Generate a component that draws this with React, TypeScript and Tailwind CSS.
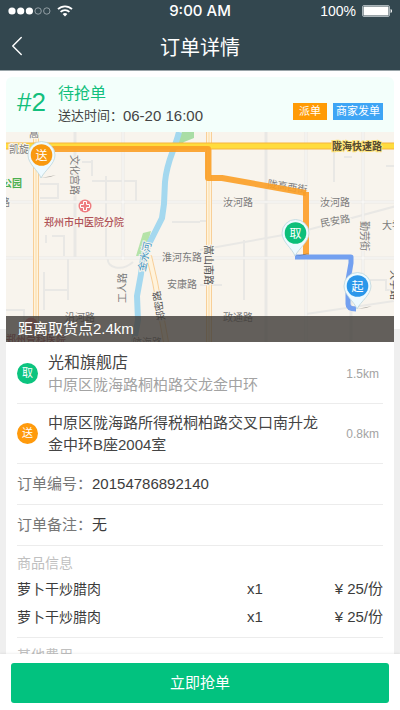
import { ChevronLeft } from "lucide-react";

type Stop = {
  mark: string;
  color: string;
  name?: string;
  address: string;
  distance: string;
};

const pickup: Stop = {
  mark: "取",
  color: "bg-[#0cc47f]",
  name: "光和旗舰店",
  address: "中原区陇海路桐柏路交龙金中环",
  distance: "1.5km",
};

const dropoff: Stop = {
  mark: "送",
  color: "bg-[#ff9a0c]",
  address: "中原区陇海路所得税桐柏路交叉口南升龙金中环B座2004室",
  distance: "0.8km",
};

const goods = [
  { id: 1, name: "萝卜干炒腊肉", count: 1, price: 25 },
  { id: 2, name: "萝卜干炒腊肉", count: 1, price: 25 },
];

function StatusBar() {
  return (
    <div className="grid h-[22px] grid-cols-3 items-center px-2 text-white">
      <div className="flex items-center gap-[6px]">
        <svg width="43" height="8" viewBox="0 0 43 8" aria-hidden="true">
          <circle cx="4" cy="4" r="3.6" fill="#fff" />
          <circle cx="12.7" cy="4" r="3.6" fill="#fff" />
          <circle cx="21.4" cy="4" r="3.6" fill="#fff" />
          <circle cx="30.1" cy="4" r="3.2" fill="none" stroke="#a9b4b9" strokeWidth="0.8" />
          <circle cx="38.8" cy="4" r="3.2" fill="none" stroke="#a9b4b9" strokeWidth="0.8" />
        </svg>
        <svg width="16" height="12" viewBox="0 0 16 12" fill="none" stroke="#fff" strokeWidth="1.8" aria-hidden="true">
          <path d="M1 4.2a10 10 0 0 1 14 0" />
          <path d="M3.6 6.9a6.3 6.3 0 0 1 8.8 0" />
          <path d="M8 11.6 5.6 9.1a3.4 3.4 0 0 1 4.8 0Z" fill="#fff" stroke="none" />
        </svg>
      </div>
      <span className="text-center font-[Inter] text-[15px] font-medium">9:00 AM</span>
      <div className="flex items-center justify-end gap-[6px]">
        <span className="text-sm">100%</span>
        <svg width="30" height="12" viewBox="0 0 30 12" aria-hidden="true">
          <rect x="0.5" y="0.5" width="27" height="11" rx="1.5" fill="none" stroke="#a9b4b9" />
          <rect x="1.5" y="1.5" width="25" height="9" rx="0.5" fill="#fff" />
          <path d="M28.600 4C30.400 4.600 30.400 7.400 28.600 8Z" fill="#fff" />
        </svg>
      </div>
    </div>
  );
}

function Pin({ x, y, mark, color }: { x: number; y: number; mark: string; color: string }) {
  return (
    <g transform={`translate(${x} ${y})`}>
      <path d="M0 0 15-3 9-1Z" fill="#000" opacity="0.3" />
      <path
        d="M0 0C-3-8-13-14-13-23a13.5 13.5 0 0 1 27 0C14-14 4-8 0 0Z"
        fill="#eefaff"
        stroke="#bcd6dc"
        strokeWidth="0.8"
      />
      <circle cx="0.5" cy="-23" r="10.8" fill={color} />
      <text x="0.5" y="-18.5" fontSize="12" fill="#fff" textAnchor="middle">
        {mark}
      </text>
    </g>
  );
}

function RouteMap() {
  return (
    <svg
      className="block h-[210px] w-full"
      viewBox="6 132 388 210"
      preserveAspectRatio="xMidYMid slice"
      role="img"
      aria-label="配送路线"
    >
      <rect x="-400" y="132" width="1200" height="210" fill="#f8f4ed" />

      {/* side streets */}
      <g fill="none" stroke="#e9e8e5" strokeWidth="3">
        <path d="M0 202H400M0 258H400" />
        <path d="M75 132V258M123 132V260M266 132V342M306 132V342M363 132V300M351 258V342" />
        <g strokeWidth="2">
          <path d="M334 150V182M244 240V300M68 258V300M44 290H68M92 160V176M92 181H136V202" />
          <path d="M40 184H58V198H40M82 162H92M106 176V258M108 258C106 268 122 272 133 262M172 222H200" />
          <path d="M200 250 300 232 400 205M306 314 400 300M344 157H352M386 166H400M6 310H24V320M370 280H386V290H400M200 285H222" />
          <path d="M46 243V235M52 236H64V256M44 272V310M200 221H206" />
        </g>
      </g>
      <path
        d="M0 202H400M0 258H400M123 132V260M306 132V342M363 132V300"
        fill="none"
        stroke="#fdfcfa"
        strokeWidth="1"
      />

      {/* river and greens */}
      <path d="M182 132H194V138L184 142 178 148 176 142Z" fill="#a9dda5" />
      <path d="M143 233 151 231 147 246 140 256H136Z" fill="#b5e3a8" />
      <path
        d="M179 132C174 152 167 160 165 182L164 204 162 218 156 230 149 244 143 258 141 274 137 296 138 320 134 342"
        fill="none"
        stroke="#a4d8ef"
        strokeWidth="6"
      />

      {/* main roads */}
      <g fill="none">
        <path d="M36 132V342M209 132V342M149 256 155 282 166 342" stroke="#f8cf98" strokeWidth="6" />
        <path d="M36 132V342M209 132V342M149 256 155 282 166 342" stroke="#fff3dc" strokeWidth="4" />
        <path d="M36 132V342M209 132V342" stroke="#fbdca9" strokeWidth="1" />
        <path d="M0 146H400" stroke="#f6b43d" strokeWidth="7" />
        <path d="M0 146H400" stroke="#ffdc3d" strokeWidth="5" />
      </g>

      <g fontSize="10" fill="#7b7b7b" stroke="#f8f4ed" strokeWidth="2" paintOrder="stroke">
        <text x="9" y="153">凯旋</text>
        <text x="223" y="206">汝河路</text>
        <text x="320" y="206">汝河路</text>
        <text x="162" y="261">淮河东路</text>
        <text x="167" y="288">安康路</text>
        <text x="65" y="321">沿河路</text>
        <text x="223" y="321">政通路</text>
        <text x="382" y="229">大学</text>
        <text x="0" y="206">路</text>
        <text x="132" y="346">航海路</text>
        <text x="29" y="137">嵩</text>
        <text transform="translate(321 227) rotate(-10)">民安路</text>
        <text transform="translate(267 187) rotate(9)">陇高西街</text>
        <text transform="translate(71 155) rotate(90)">文化宫路</text>
        <text transform="translate(126 303) rotate(-90)">工人路</text>
        <text transform="translate(361 221) rotate(90)">勤劳街</text>
        <text transform="translate(205 245) rotate(90)" fill="#555">嵩山南路</text>
        <text transform="translate(165 320) rotate(-100)" fill="#555">郑密路</text>
        <text transform="translate(391 270) rotate(90)" fill="#555">大学路</text>
      </g>

      {/* route */}
      <g fill="none" strokeLinejoin="round" strokeWidth="6">
        <path d="M306 192V257" stroke="#fda63a" />
        <path d="M42 149H208V178H222L306 193" stroke="#fb9e25" strokeOpacity="0.9" />
        <path d="M295 257H351V263L348 280V304Q348 309 356 309" stroke="#73a0f0" strokeWidth="5" />
      </g>

      {/* hospitals */}
      <circle cx="85" cy="206" r="6.5" fill="#ee7c80" />
      <path d="M83.5 201.500h3v3h3v3h-3v3h-3v-3h-3v-3h3Z" fill="none" stroke="#fff" strokeWidth="1" />
      <circle cx="31" cy="324" r="6.5" fill="#ee7c80" />

      <g fontSize="10" stroke="#f8f4ed" strokeWidth="2" paintOrder="stroke">
        <text x="332" y="150" stroke="#ffe680" fontWeight="700" fill="#54492f">
          陇海快速路
        </text>
        <text x="44" y="226" fontWeight="500" fill="#b05358">
          郑州市中医院分院
        </text>
        <text x="6" y="343" fontWeight="500" fill="#b05358">
          郑州骨科医院
        </text>
        <text x="-8" y="187" fontWeight="700" fill="#4caf50">
          山公园
        </text>
        <text transform="translate(145 272) rotate(-78)" fill="#3d94c2">
          金水河
        </text>
      </g>

      <Pin x={41} y={178} mark="送" color="#f9990f" />
      <Pin x={295} y={256} mark="取" color="#0cbf7a" />
      <Pin x={357} y={309} mark="起" color="#2b97ea" />
    </svg>
  );
}

function StopRow({ stop }: { stop: Stop }) {
  return (
    <li className="flex min-h-[60px] items-center border-b border-[#ececec] text-[#444]">
      <span
        className={`flex size-[21px] shrink-0 items-center justify-center rounded-full text-[11px] text-white ${stop.color}`}
      >
        {stop.mark}
      </span>
      <div className="ml-[10px] w-[276px] leading-[22px]">
        {stop.name && <h2 className="text-base leading-[22px]">{stop.name}</h2>}
        <p className={stop.name ? "text-[15px] text-[#a3a3a3]" : "text-[15px]"}>{stop.address}</p>
      </div>
      <span className="ml-auto pr-1 text-xs text-[#a3a3a3]">{stop.distance}</span>
    </li>
  );
}

function InfoRow({ label, value }: { label: string; value: string }) {
  return (
    <div className="flex h-[41px] items-center border-b border-[#ececec] text-[15px]">
      <dt className="text-[#777]">{label}：</dt>
      <dd className="text-[#3c3c3c]">{value}</dd>
    </div>
  );
}

export default function App() {
  return (
    <div className="flex h-dvh flex-col overflow-hidden bg-white font-['Liberation_Sans','Noto_Sans_CJK_SC',sans-serif] text-[#444]">
      <header className="shrink-0 border-b border-[#9aa5a9] bg-[#33474f] text-white">
        <StatusBar />
        <div className="grid h-12 grid-cols-[40px_1fr_40px] items-center">
          <button type="button" aria-label="返回" className="flex justify-center pr-[6px]">
            <ChevronLeft className="size-9" strokeWidth={1} />
          </button>
          <h1 className="pt-[3px] text-center text-xl">订单详情</h1>
        </div>
      </header>

      <main className="min-h-0 flex-1 overflow-hidden bg-[linear-gradient(#fff_258px,#efefef_258px)] px-[6px] pt-[6px]">
        <article className="rounded-t-md bg-white">
          <div className="flex h-[55px] items-center rounded-t-md bg-[#f3fffb] px-[11px]">
            <span className="pb-1 text-[26px] text-[#13bf7d]">#2</span>
            <div className="ml-3">
              <p className="text-base leading-[22px] text-[#13bf7d]">待抢单</p>
              <p className="flex items-center leading-[22px]">
                <span className="text-[13px]">送达时间：</span>
                <time className="text-[15px]">06-20 16:00</time>
              </p>
            </div>
            <div className="ml-auto flex gap-[6px] self-end pb-3 text-[11px] leading-[17px] text-white">
              <span className="bg-[#ff9b05] px-[6px]">派单</span>
              <span className="bg-[#3ea5f5] px-[3px]">商家发单</span>
            </div>
          </div>

          <div className="relative">
            <RouteMap />
            <p className="absolute inset-x-0 bottom-0 bg-[#3d3a36]/80 px-3 text-[15px] leading-[26px] text-white">
              距离取货点2.4km
            </p>
          </div>

          <div className="px-[11px] pt-[2px]">
            <ul>
              <StopRow stop={pickup} />
              <StopRow stop={dropoff} />
            </ul>
            <dl>
              <InfoRow label="订单编号" value="20154786892140" />
              <InfoRow label="订单备注" value="无" />
            </dl>
            <section className="border-b border-[#ececec] pt-[7px] pb-[6px]">
              <h2 className="text-sm text-[#c0c0c0]">商品信息</h2>
              <table className="mt-[2px] w-full text-[15px] text-[#3c3c3c]">
                <tbody>
                  {goods.map((item) => (
                    <tr key={item.id} className="h-7">
                      <td className="text-sm">{item.name}</td>
                      <td className="w-[68px]">x{item.count}</td>
                      <td className="w-[68px] text-right">¥ {item.price}/份</td>
                    </tr>
                  ))}
                </tbody>
              </table>
            </section>
            <section className="pt-[7px]">
              <h2 className="text-sm text-[#c0c0c0]">其他费用</h2>
            </section>
          </div>
        </article>
      </main>

      <footer className="relative shrink-0 bg-white px-[11px] pt-[9px] pb-[7px] shadow-[0_-1px_2px_rgba(0,0,0,0.06)]">
        <button type="button" className="h-10 w-full rounded-[3px] bg-[#02c27f] text-[15px] text-white">
          立即抢单
        </button>
      </footer>
    </div>
  );
}
